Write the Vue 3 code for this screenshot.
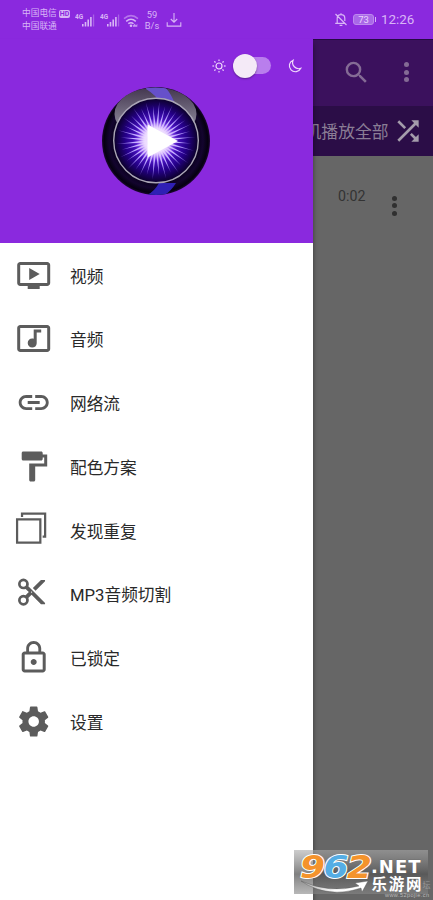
<script setup>
const items = [
  { label: '视频', icon: 'video' },
  { label: '音频', icon: 'music' },
  { label: '网络流', icon: 'link' },
  { label: '配色方案', icon: 'paint' },
  { label: '发现重复', icon: 'copies' },
  { label: 'MP3音频切割', icon: 'cut' },
  { label: '已锁定', icon: 'lock' },
  { label: '设置', icon: 'gear' },
]
const paths = {
  video: 'M21 3H3c-1.11 0-2 .89-2 2v12c0 1.1.89 2 2 2h5v2h8v-2h5c1.1 0 2-.9 2-2V5c0-1.11-.9-2-2-2zm0 14H3V5h18v12zm-5-6l-7 4V7z',
  music: 'M21 3H3c-1.1 0-2 .9-2 2v14c0 1.1.9 2 2 2h18c1.1 0 2-.9 2-2V5c0-1.1-.9-2-2-2zm0 16H3V5h18v14zM8 15c0-1.66 1.34-3 3-3 .35 0 .69.07 1 .18V6h5v2h-3v7.03c-.02 1.64-1.35 2.97-3 2.97-1.66 0-3-1.34-3-3z',
  link: 'M3.9 12c0-1.71 1.39-3.1 3.1-3.1h4V7H7c-2.76 0-5 2.24-5 5s2.24 5 5 5h4v-1.9H7c-1.71 0-3.1-1.39-3.1-3.1zM8 13h8v-2H8v2zm9-6h-4v1.9h4c1.71 0 3.1 1.39 3.1 3.1s-1.39 3.1-3.1 3.1h-4V17h4c2.76 0 5-2.24 5-5s-2.24-5-5-5z',
  paint: 'M18 4V3c0-.55-.45-1-1-1H5c-.55 0-1 .45-1 1v4c0 .55.45 1 1 1h12c.55 0 1-.45 1-1V6h1v4H9v11c0 .55.45 1 1 1h2c.55 0 1-.45 1-1v-9h8V4h-3z',
  copies: 'M.3 4.2h17v17H.3zM1.8 5.7v14h14v-14zM3.6.3h16.9v16.9h-2.4v-1.5H19V1.8H5.1v1.5H3.6z',
  cut: 'M8.9 7.9c.2-.45.32-.94.32-1.46A3.6 3.6 0 1 0 5.6 10.05c.52 0 1.02-.12 1.46-.32l2.14 2.15-2.14 2.14a3.5 3.5 0 0 0-1.46-.32 3.6 3.6 0 1 0 3.62 3.6c0-.51-.12-1-.32-1.46l2.14-2.14 6.3 6.32h2.7v-.9zM5.6 8.25a1.8 1.8 0 1 1 0-3.61 1.8 1.8 0 0 1 0 3.61zm0 10.85a1.8 1.8 0 1 1 0-3.6 1.8 1.8 0 0 1 0 3.6zm5.44-6.77a.45.45 0 1 1 0-.9.45.45 0 0 1 0 .9zM17.3 3.75l-5.4 5.4 1.8 1.82 6.33-6.32v-.9z',
  lock: 'M12 17c1.1 0 2-.9 2-2s-.9-2-2-2-2 .9-2 2 .9 2 2 2zm6-9h-1V6c0-2.76-2.24-5-5-5S7 3.24 7 6v2H6c-1.1 0-2 .9-2 2v10c0 1.1.9 2 2 2h12c1.1 0 2-.9 2-2V10c0-1.1-.9-2-2-2zM8.9 6c0-1.71 1.39-3.1 3.1-3.1s3.1 1.39 3.1 3.1v2H8.9V6zM18 20H6V10h12v10z',
  gear: 'M19.43 12.98c.04-.32.07-.64.07-.98s-.03-.66-.07-.98l2.11-1.65c.19-.15.24-.42.12-.64l-2-3.46c-.12-.22-.39-.3-.61-.22l-2.49 1c-.52-.4-1.08-.73-1.69-.98l-.38-2.65C14.46 2.18 14.25 2 14 2h-4c-.25 0-.46.18-.49.42l-.38 2.65c-.61.25-1.17.59-1.69.98l-2.49-1c-.23-.09-.49 0-.61.22l-2 3.46c-.13.22-.07.49.12.64l2.11 1.65c-.04.32-.07.65-.07.98s.03.66.07.98l-2.11 1.65c-.19.15-.24.42-.12.64l2 3.46c.12.22.39.3.61.22l2.49-1c.52.4 1.08.73 1.69.98l.38 2.65c.03.24.24.42.49.42h4c.25 0 .46-.18.49-.42l.38-2.65c.61-.25 1.17-.59 1.69-.98l2.49 1c.23.09.49 0 .61-.22l2-3.46c.12-.22.07-.49-.12-.64l-2.11-1.65zM12 15.5c-1.93 0-3.5-1.57-3.5-3.5s1.57-3.5 3.5-3.5 3.5 1.57 3.5 3.5-1.57 3.5-3.5 3.5z',
}
const rays = Array.from({ length: 36 }, (_, i) => ({ angle: i * 10 + 5, top: i % 2 ? 19 : 15 }))
const sunRays = [0, 45, 90, 135, 180, 225, 270, 315]
</script>

<template>
  <div class="screen">
    <header class="status">
      <div class="carriers">
        <div class="carrier">中国电信<span class="hd">HD</span></div>
        <div class="carrier">中国联通</div>
      </div>
      <svg v-for="n in 2" :key="n" class="signal" viewBox="0 0 21 16">
        <text x="0" y="6.5" class="gen">4G</text>
        <path d="M7 12h1.6v2.5H7zM9.7 10h1.6v4.5H9.7zM12.4 7.5H14v7h-1.6zM15.1 5h1.6v9.5h-1.6z" />
        <path d="M17.9 2.5h1.3v12h-1.3z" opacity=".4" />
      </svg>
      <svg class="wifi" viewBox="0 0 16 14">
        <g fill="none" stroke="currentColor" stroke-width="1.5">
          <path d="M1 4.6q7-6 14 0" opacity=".55" />
          <path d="M3.2 7.3q4.8-4 9.6 0M5.3 9.7q2.7-2.1 5.2 0" />
        </g>
        <circle cx="8" cy="11.8" r="1.3" />
        <path d="M10 11.5l1.8-1.8 1.2 1.8 1.3-1.8v3.1H10z" opacity=".8" />
      </svg>
      <div class="speed"><span>59</span><span>B/s</span></div>
      <svg class="download" viewBox="0 0 16 16">
        <path d="M8 1v9M4.8 7L8 10.2 11.2 7M1.2 10.3v3.8h13.6v-3.8" />
      </svg>
      <div class="grow"></div>
      <svg class="bell" viewBox="0 0 14 15">
        <path d="M3.2 11V6.2Q3.2 2.7 7 2.7t3.8 3.5V9M1.2 11.3h9.5M7 2.7V1.2M5.6 13.3h2.8M1.5 2l11 11" />
      </svg>
      <div class="battery">73</div>
      <time>12:26</time>
    </header>

    <main class="body">
      <aside class="drawer">
        <div class="banner">
          <div class="theme">
            <svg class="sun" viewBox="0 0 14 14">
              <circle cx="7" cy="7" r="3" />
              <path v-for="a in sunRays" :key="a" d="M7 .4v1.7" :transform="`rotate(${a} 7 7)`" />
            </svg>
            <div class="switch"><i></i></div>
            <svg class="moon" viewBox="0 0 14 14">
              <path d="M5.1 1.2A6 6 0 1 0 12.8 9.3 6.1 6.1 0 0 1 5.1 1.2z" />
            </svg>
          </div>
          <svg class="logo" viewBox="0 0 110 110">
            <defs>
              <radialGradient id="shell">
                <stop offset=".76" stop-color="#09001c" />
                <stop offset=".87" stop-color="#13042e" />
                <stop offset=".96" stop-color="#050010" />
                <stop offset="1" stop-color="#1c0732" />
              </radialGradient>
              <radialGradient id="core">
                <stop offset="0" stop-color="#fff" />
                <stop offset=".24" stop-color="#b07cff" />
                <stop offset=".42" stop-color="#5317d0" />
                <stop offset=".72" stop-color="#25008a" />
                <stop offset="1" stop-color="#0b0028" />
              </radialGradient>
              <radialGradient id="beam" gradientUnits="userSpaceOnUse" cx="55" cy="54.5" r="40">
                <stop offset=".3" stop-color="#fff" />
                <stop offset=".6" stop-color="#b8a0ff" />
                <stop offset="1" stop-color="#5530b4" />
              </radialGradient>
              <radialGradient id="glow">
                <stop offset="0" stop-color="#fff" />
                <stop offset=".55" stop-color="#e9d5ff" stop-opacity=".9" />
                <stop offset="1" stop-color="#954fff" stop-opacity="0" />
              </radialGradient>
              <linearGradient id="gloss" x2="0" y2="1">
                <stop offset="0" stop-color="#40334c" />
                <stop offset="1" stop-color="#858093" />
              </linearGradient>
              <clipPath id="cap"><ellipse cx="54.5" cy="28" rx="41" ry="26.5" /></clipPath>
              <clipPath id="disc"><circle cx="55" cy="55" r="54" /></clipPath>
            </defs>
            <circle cx="55" cy="55" r="54" fill="url(#shell)" />
            <g clip-path="url(#cap)">
              <path d="M13 0h84v37H13z" fill="url(#gloss)" />
              <path d="M45 0h18q7 7 11 18H60Q55 9 45 3z" fill="#6650ca" />
            </g>
            <path d="M58 97h17q-8 13-18 14H41q11-3 17-14z" fill="#2f20b5" clip-path="url(#disc)" />
            <circle cx="55" cy="54.5" r="42.3" fill="url(#core)" stroke="#aaa5b6" stroke-width="1.4" />
            <path v-for="r in rays" :key="r.angle" :d="`M53.8 45L55 ${r.top}L56.2 45z`" fill="url(#beam)" :transform="`rotate(${r.angle} 55 54.5)`" />
            <circle cx="55" cy="54.5" r="22" fill="url(#glow)" />
            <path d="M46.5 38.5v33L77 55z" fill="#fff" />
          </svg>
        </div>
        <nav>
          <a v-for="item in items" :key="item.icon" class="item">
            <svg :class="['icon', item.icon]" viewBox="0 0 24 24"><path fill-rule="evenodd" :d="paths[item.icon]" /></svg>
            <span>{{ item.label }}</span>
          </a>
        </nav>
      </aside>

      <section class="page">
        <div class="toolbar">
          <svg class="search" viewBox="0 0 24 24"><path d="M15.5 14h-.79l-.28-.27A6.47 6.47 0 0 0 16 9.5 6.5 6.5 0 1 0 9.5 16c1.61 0 3.09-.59 4.23-1.57l.27.28v.79l5 4.99L20.49 19l-4.99-5zm-6 0a4.5 4.5 0 1 1 0-9 4.5 4.5 0 0 1 0 9z" /></svg>
          <div class="dots"><i></i><i></i><i></i></div>
        </div>
        <div class="shuffle">
          <span>机播放全部</span>
          <svg viewBox="0 0 24 24"><path d="M10.59 9.17L5.41 4 4 5.41l5.17 5.17 1.42-1.41zM14.5 4l2.04 2.04L4 18.59 5.41 20 17.96 7.46 20 9.5V4h-5.5zm.33 9.41l-1.41 1.41 3.13 3.13L14.5 20H20v-5.5l-2.04 2.04-3.13-3.13z" /></svg>
        </div>
        <div class="track">
          <span>0:02</span>
          <div class="dots"><i></i><i></i><i></i></div>
        </div>
      </section>
    </main>

    <svg class="mark" viewBox="0 0 139 50">
      <defs>
        <linearGradient id="plate" x2="0" y2="1">
          <stop offset="0" stop-color="#aaa" stop-opacity=".6" />
          <stop offset=".55" stop-color="#555" stop-opacity=".75" />
          <stop offset="1" stop-color="#888" stop-opacity=".6" />
        </linearGradient>
        <linearGradient id="swoosh"><stop offset="0" stop-color="#aaa" /><stop offset=".5" stop-color="#fff" /></linearGradient>
      </defs>
      <rect width="134" height="44" fill="url(#plate)" />
      <path d="M7 31q29 13 58 5l-4-3 13-2-6 11-1-4Q34 49 7 31z" fill="url(#swoosh)" stroke="#555" stroke-width=".4" />
      <g class="digits">
        <text x="6" y="27.5" textLength="25" lengthAdjust="spacingAndGlyphs" fill="#f4932c">9</text>
        <text x="29.5" y="27.5" textLength="25" lengthAdjust="spacingAndGlyphs" fill="#55ade4">6</text>
        <text x="53" y="27.5" textLength="25" lengthAdjust="spacingAndGlyphs" fill="#f4932c">2</text>
      </g>
      <text x="77" y="22.5" class="net">.NET</text>
      <text x="77.5" y="39.5" class="name" textLength="50">乐游网</text>
      <text x="128.5" y="38" class="ghost">坛</text>
      <text x="91" y="47" class="url" textLength="44">www.52pojie.cn</text>
    </svg>
  </div>
</template>

<style>
body { margin: 0; }
</style>

<style scoped>
* { box-sizing: border-box; }
svg { display: block; flex: none; fill: currentColor; }
.screen { position: relative; display: flex; flex-direction: column; width: 433px; height: 900px; overflow: hidden; background: #666; font-family: Roboto, "Noto Sans CJK SC", sans-serif; }
.status { display: flex; align-items: center; height: 39px; flex: none; padding: 0 18px 0 22px; background: #8a29de; color: #d8b5f6; }
.carriers { width: 53px; font-size: 8.7px; line-height: 13px; white-space: nowrap; padding-top: 1px; }
.carrier { display: flex; align-items: center; height: 13px; }
.hd { margin-left: 2px; padding: 0 1px; height: 8px; border-radius: 2px; background: #d8b5f6; color: #8a29de; font-size: 7px; line-height: 8px; font-weight: 700; }
.signal { width: 21px; height: 16px; margin-right: 3.5px; }
.gen { font-size: 6.5px; font-weight: 700; }
.wifi { width: 16px; height: 14px; margin: 2px 0 0 -1.5px; }
.speed { display: flex; flex-direction: column; align-items: center; width: 25px; font-size: 9.3px; line-height: 11px; }
.download { width: 16px; height: 16px; fill: none; stroke: currentColor; stroke-width: 1.1; }
.grow { flex: 1; }
.bell { width: 14px; height: 15px; fill: none; stroke: currentColor; stroke-width: 1.2; }
.battery { position: relative; width: 21px; height: 11px; margin: 0 7px 0 5px; border: 1px solid #bd89ee; border-radius: 3px; background: #a968e8; color: #ead5fb; font-size: 9.5px; line-height: 9.5px; text-align: center; }
.battery::after { content: ""; position: absolute; right: -3px; top: 2px; width: 1.5px; height: 5px; background: #d8b5f6; }
time { width: 34px; font-size: 13.4px; white-space: nowrap; }
.speed, .download { margin-left: 1px; }
.body { display: flex; flex: 1; }
.drawer { width: 313px; flex: none; background: #fff; box-shadow: 0 5px 5px rgba(0,0,0,.45); z-index: 1; }
.banner { height: 204px; background: #8a29de; }
.theme { display: flex; align-items: center; height: 40px; padding: 13px 11px 0 212px; color: #f0d9fb; }
.sun, .moon { width: 14px; height: 14px; fill: none; stroke: currentColor; stroke-width: 1.2; }
.switch { display: flex; align-items: center; width: 36px; height: 17px; margin: 0 17px 0 10px; border-radius: 9px; background: #b97eed; }
.switch i { width: 24px; height: 24px; flex: none; margin-left: -3px; border-radius: 50%; background: #f4eaf7; box-shadow: 0 1px 2px rgba(0,0,0,.35); }
.logo { width: 110px; height: 110px; margin: 6.5px 0 0 101.3px; }
nav { padding-top: .7px; }
.item { display: flex; align-items: center; height: 63.75px; color: #292929; font-size: 16.7px; }
.icon { width: 36px; height: 36px; margin: 0 18.5px 0 15.5px; color: #5c5c5c; transform: translate(-.3px, -.4px); }
.icon.copies { transform: translate(-.5px, -1px); }
.icon.cut { transform: translate(-1px, -1.7px); }
.page { flex: 1; min-width: 0; background: #666; color: #8f829b; }
.toolbar { display: flex; align-items: center; height: 67px; padding: 0 24px 0 29px; background: #3b115d; color: #846b95; border-top: 1px solid #260a43; }
.search { width: 29px; height: 29px; transform: translateY(-1px); }
.toolbar .dots { margin-left: auto; }
.dots { display: flex; flex-direction: column; gap: 2.4px; }
.dots i { width: 5px; height: 5px; border-radius: 50%; background: currentColor; }
.toolbar .dots { transform: translateY(-1px); }
.shuffle { display: flex; align-items: center; justify-content: flex-end; height: 50px; padding-right: 9.5px; background: #2b0d47; color: #8a7d95; font-size: 16.8px; white-space: nowrap; overflow: hidden; }
.shuffle svg { width: 32px; height: 32px; margin-left: 3px; color: #a49cab; }
.track { display: flex; justify-content: space-between; padding: 32px 36px 0 25px; color: #333; font-size: 14.2px; line-height: 16px; }
.track .dots { padding-top: 8px; color: #303030; }
.mark { position: absolute; left: 294px; top: 850px; width: 139px; height: 50px; z-index: 2; }
.digits { font: italic 700 32px "DejaVu Sans", sans-serif; paint-order: stroke; stroke: #fff; stroke-width: 2px; }
.net { font: 700 18px "DejaVu Sans", sans-serif; fill: #fff; stroke: #666; stroke-width: .6px; paint-order: stroke; letter-spacing: 1px; }
.name { font: 700 15.5px "Noto Sans CJK SC", sans-serif; fill: #fff; }
.ghost { font-size: 8px; fill: #999; }
.url { font: 5.6px "Liberation Sans", sans-serif; fill: #bbb; }
</style>
